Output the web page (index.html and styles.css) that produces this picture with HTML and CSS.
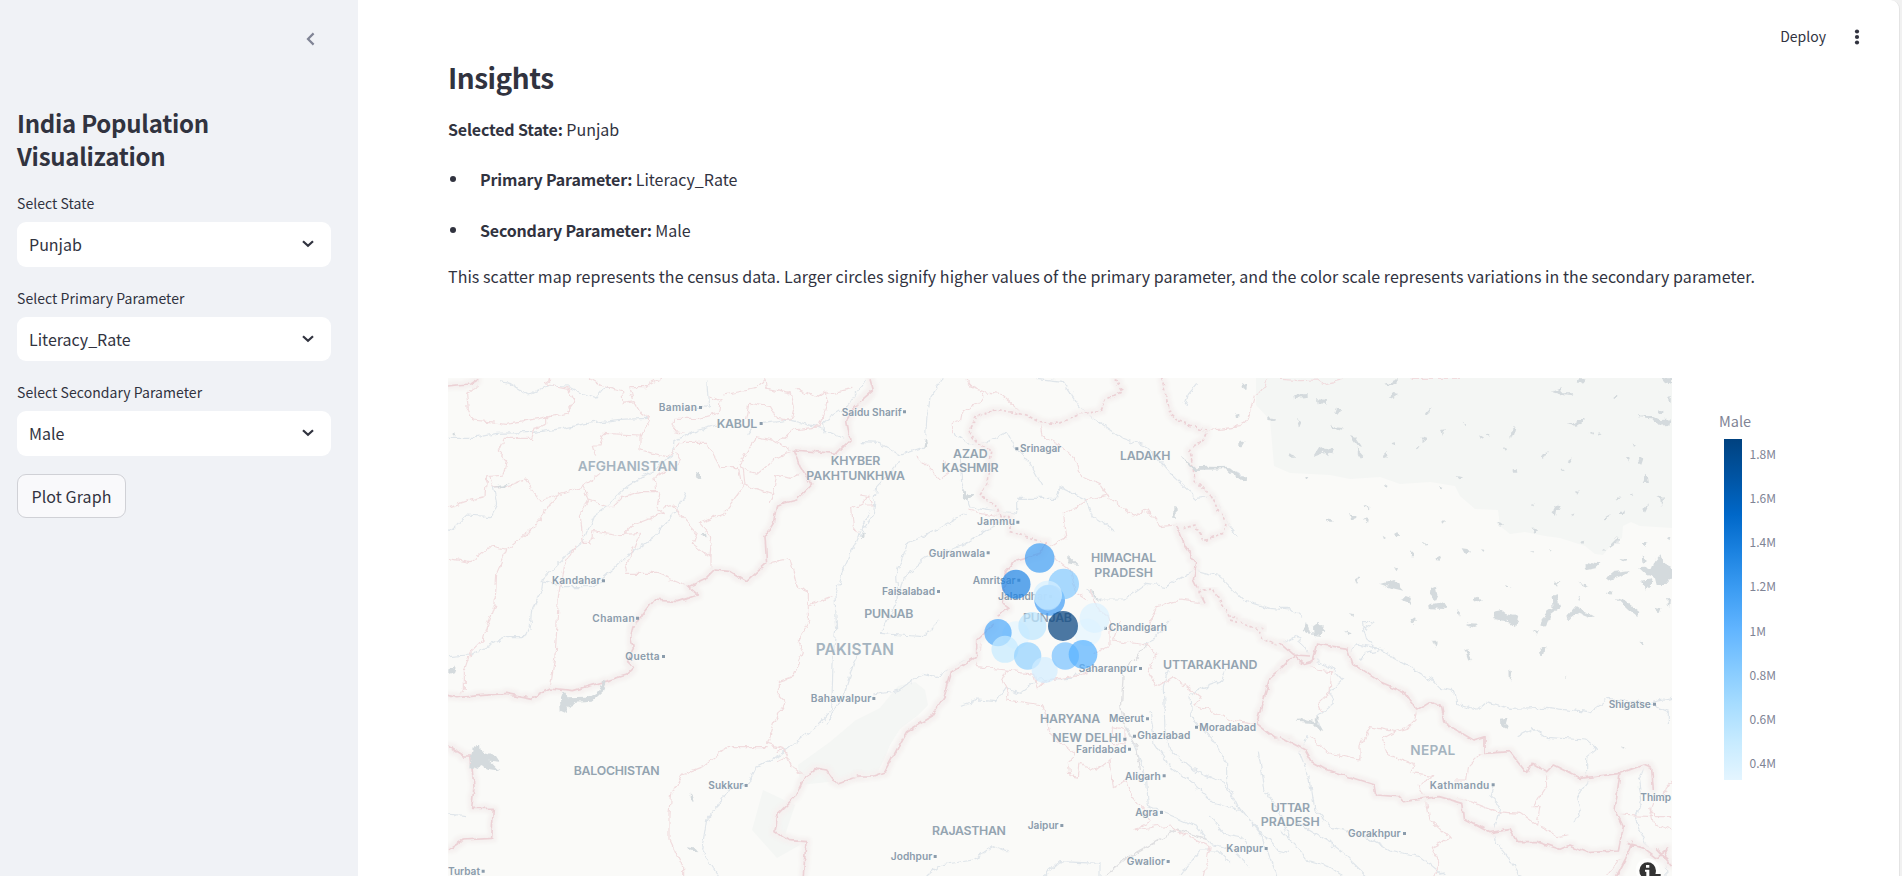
FILE: index.html
```
<!DOCTYPE html>
<html lang="en">
<head>
<meta charset="utf-8">
<title>India Population Visualization</title>
<link rel="stylesheet" href="styles.css">
</head>
<body>
<div class="app">
<aside class="sidebar">
  <div class="collapse"><svg width="9" height="14" viewBox="0 0 9 14"><path d="M7.6 1.4 2 7l5.600 5.600"/></svg></div>
  <h1>India Population Visualization</h1>
  <div class="field"><label>Select State</label><div class="select"><span>Punjab</span><svg width="12" height="8" viewBox="0 0 12 8"><path d="M1 1.200 6 5.800 11 1.200"/></svg></div></div>
  <div class="field"><label>Select Primary Parameter</label><div class="select"><span>Literacy_Rate</span><svg width="12" height="8" viewBox="0 0 12 8"><path d="M1 1.200 6 5.800 11 1.200"/></svg></div></div>
  <div class="field"><label>Select Secondary Parameter</label><div class="select"><span>Male</span><svg width="12" height="8" viewBox="0 0 12 8"><path d="M1 1.200 6 5.800 11 1.200"/></svg></div></div>
  <button class="plot">Plot Graph</button>
</aside>
<main class="main">
  <header class="toolbar"><span>Deploy</span><svg width="6" height="16" viewBox="0 0 6 16"><circle cx="3" cy="2.500" r="2.100"/><circle cx="3" cy="8" r="2.100"/><circle cx="3" cy="13.500" r="2.100"/></svg></header>
  <section class="insights">
    <h2>Insights</h2>
    <p class="state-line"><b>Selected State:</b> Punjab</p>
    <ul><li><b>Primary Parameter:</b> Literacy_Rate</li><li><b>Secondary Parameter:</b> Male</li></ul>
    <p class="desc">This scatter map represents the census data. Larger circles signify higher values of the primary parameter, and the color scale represents variations in the secondary parameter.</p>
  </section>
  <section class="chart">
  <svg class="map" viewBox="448 378 1224 498">
    <defs>
      <filter id="rough" x="-5%" y="-5%" width="110%" height="110%" color-interpolation-filters="sRGB">
        <feTurbulence type="fractalNoise" baseFrequency=".04" numOctaves="3" seed="4" result="n"/>
        <feDisplacementMap in="SourceGraphic" in2="n" scale="20" xChannelSelector="R" yChannelSelector="G"/>
      </filter>
      <filter id="frontier" x="-5%" y="-5%" width="110%" height="110%" color-interpolation-filters="sRGB">
        <feTurbulence type="fractalNoise" baseFrequency=".04" numOctaves="2" seed="9" result="n"/>
        <feDisplacementMap in="SourceGraphic" in2="n" scale="16" xChannelSelector="R" yChannelSelector="G" result="l"/>
        <feMorphology in="l" operator="dilate" radius="8" result="d"/>
        <feGaussianBlur in="d" stdDeviation="4" result="b"/>
        <feFlood flood-color="#f5f1f0"/><feComposite in2="b" operator="in" result="h"/>
        <feMerge><feMergeNode in="h"/><feMergeNode in="l"/></feMerge>
      </filter>
    </defs>
    <rect x="448" y="378" width="1224" height="498" fill="#fafaf8"/>
    <path class="land" d="M1256 378H1672V528L1640 526 1631 522 1623 526 1622 538 1612 544 1603 555 1595 554 1585 546 1560 538 1545 536 1525 532 1510 534 1500 526 1498 510 1475 509 1460 496 1455 486 1430 482 1400 484 1380 477 1350 479 1330 475 1290 473 1274 466 1270 420 1256 405Z"/>
    <path class="land" d="M898 686 915 682 925 690 928 705 918 715 900 729 890 745 884 760 875 777 800 785 798 765 830 742 856 720 880 708Z"/>
    <path class="land" d="M763 790 795 805 785 835 800 845 777 858 752 830Z"/>

    <g class="tile" transform="translate(440 370) scale(.33333)">
      <g class="river" filter="url(#rough)">
        <path d="M180 35 210 40 265 75 330 45 380 48 425 70 465 85 490 55 520 55M24 205 100 205 170 190 285 187 370 175 440 160 540 148 625 145M800 30 806 110 780 115 730 115M830 165 760 185 705 215 700 250 640 300 560 350 500 410 460 440 430 515 375 560 310 625 305 660 275 720 270 780M24 488 80 435 150 440 170 400 160 352 205 345M735 370 710 420 640 500 560 560 500 615 460 650 370 650 305 635M970 160 1050 150 1130 170 1210 205M1280 30 1220 110 1150 155 1155 190M1290 420 1255 500 1210 600 1185 680 1190 780M920 195 935 175"/>
      </g>
      <g class="region" filter="url(#rough)">
        <path d="M110 45 80 70 85 120 100 150 200 160 300 145 380 130 405 95 385 55 310 40 330 25M320 135 320 165 285 175 275 205 190 205 175 240 200 270 190 315 140 320 135 380 85 392 24 412M445 25 490 50 545 65 550 100 585 95 605 130 628 145 600 200 600 240 680 260 700 245 720 220 800 220 840 290 895 290 905 345M660 25 620 50 570 50 580 90M600 195 490 190 480 225 460 225 470 260M480 310 430 350 360 375 300 390 255 330 205 350 160 350 150 320M430 350 445 395 420 430 430 520 450 520 460 485 520 495 600 490 575 550 555 590 560 610 650 610 725 640 745 655M445 390 500 410 520 410 550 380 600 365 660 365 650 415 670 430 580 465 550 495M670 415 700 405 750 470 770 490 760 520 810 560 815 500 780 460 850 430 915 345 910 300 900 280 950 200 1000 210 1050 240M710 250 720 270 700 295 645 320 650 365M810 560 810 600M24 565 90 578 145 530 200 540 260 490 300 450 330 400 360 370M200 540 170 610 165 700 140 780M410 525 370 590 355 680 350 780M806 80 840 95 835 130 780 145 705 145 700 185 735 190M850 75 950 55 975 25M920 150 930 100 990 110 1010 145 1050 150 1060 110 1050 70 980 55 975 30M1070 55 1130 85 1160 65 1160 105 1140 170 1060 180 1010 220M1160 70 1240 55M1050 245 1000 270 950 310 910 300M1100 305 1050 325 1010 315 1000 375 910 345M1000 375 990 400M980 580 1050 565 1070 650 1105 665 1105 705 1175 680M1105 705 1105 750M1290 375 1265 400 1235 415 1240 470 1255 490"/>
      </g>
      <g class="border" filter="url(#frontier)">
        <path d="M24 48 50 45 90 42 115 25M1290 70 1245 110 1220 150 1230 210 1190 250 1060 240 1080 290 1115 345 1070 390 1010 405 1000 460 975 500 980 580 920 635 870 605 825 600 800 625 745 650 775 675 715 695 640 690 605 735 575 780"/>
      </g>
      <g class="lake" filter="url(#rough)"><path d="M768 305 780 305 780 328 773 326ZM785 490 798 488 800 502 790 500ZM160 352 190 345 210 335 195 352ZM38 190 46 186 46 200 38 198ZM1265 494 1275 494 1272 504 1266 503Z"/></g>
      <g class="city"><text x="656" y="122" textLength="115">Bamian</text><text x="336" y="643" textLength="146">Kandahar</text><text x="457" y="755" textLength="127">Chaman</text><path d="M777 108h9v9h-9zM486 628h9v9h-9zM588 740h9v9h-9zM959 156h9v9h-9z"/></g>
      <g class="state"><text x="830" y="174" textLength="122">KABUL</text></g>
      <g class="country"><text x="413" y="302" textLength="301">AFGHANISTAN</text></g>
    </g>

    <g class="tile" transform="translate(440 620) scale(.33333)">
      <g class="river" filter="url(#rough)"><path d="M24 110 90 105 150 75 200 50 255 50 275 0M1190 0 1180 100 1175 270 1130 320 1060 375 1020 405 950 440 925 490 860 515 830 560 800 600 785 690 835 768M1260 95 1240 130 1210 230 1160 310M24 582 78 587"/></g>
      <g class="region" filter="url(#rough)"><path d="M145 0 130 60 90 100 73 150 73 210 60 228M350 30 345 110 330 205M1110 0 1075 60 1090 95 1060 170 1015 185 1015 230 1035 250 1000 310 980 370 1030 385 1055 440 1095 468M980 380 865 380 790 440 725 465 695 520 690 580 690 660 728 740 728 768M1010 395 1030 390 1040 410 1010 425"/></g>
      <g class="border" filter="url(#frontier)"><path d="M580 15 572 50 580 85 560 125 580 145 560 165 400 212 330 204 275 235 200 220 50 233 24 226M24 378 70 408 92 408 102 500 95 565 160 565 155 655 70 660 24 690M1260 468 1190 492 1160 450 1130 445 1095 470 1065 530 1015 580 1005 635 1050 662 1098 665 1090 768"/></g>
      <g class="lake" filter="url(#rough)"><path d="M368 215 380 215 382 235 440 233 480 210 492 183 500 185 488 215 455 245 410 248 385 260 375 278 362 272 360 235ZM98 385 120 370 122 393 165 405 178 425 148 422 178 452 150 448 120 435 110 450 88 440ZM745 530 757 520 757 548ZM740 682 765 685 775 697 755 695ZM25 148 48 143 42 160 25 165Z"/></g>
      <g class="city"><text x="556" y="121" textLength="103">Quetta</text><text x="805" y="507" textLength="105">Sukkur</text><text x="24" y="765" textLength="96">Turbat</text><text x="1112" y="245" textLength="182">Bahawalpur</text><path d="M666 105h9v9h-9zM914 492h9v9h-9zM125 749h9v9h-9zM1297 231h9v9h-9z"/></g>
      <g class="state"><text x="401" y="464" textLength="258">BALOCHISTAN</text></g>
      <g class="country big"><text x="1127" y="106" textLength="235">PAKISTAN</text></g>
    </g>

    <g class="tile" transform="translate(860 370) scale(.33333)">
      <g class="river" filter="url(#rough)"><path d="M250 25 210 80 200 150 195 230 120 255 60 220 0 218M530 25 610 35 660 110 700 145 790 205 860 230 940 320 1010 385 1060 380 1090 440 1135 500M1010 40 985 70 975 105M285 190 330 225 385 215 440 185 465 230 510 280 545 345M300 240 305 340 330 410 470 430 470 385 590 385 600 350 680 390 700 440 760 480M440 450 380 480 320 520 200 560 130 620 110 700 65 780M120 270 115 280 50 350 40 430 0 500M320 430 190 500 140 520 110 620 115 690M680 660 720 690 790 690 860 640 920 650 1000 600 1080 620 1150 690 1230 715 1290 720M1000 295 1100 292 1150 320"/></g>
      <g class="region" filter="url(#rough)"><path d="M318 25 330 50 370 65 360 95 310 125 305 150 280 160 280 190M370 65 420 70 480 125M540 155 550 200 590 220 640 260 665 320 720 345 740 375 820 440 860 415 900 470 950 465M740 375 680 390 610 430 620 500 570 530M0 375 30 380 40 405 15 405M170 260 200 290 240 330 265 310 250 270M325 420 420 440M580 560 630 600 650 670 680 690M690 660 715 720 745 740 760 780M1040 700 960 690 890 710 870 760 875 780M1220 25 1215 50 1185 70 1165 140 1140 170 1045 182"/></g>
      <g class="border"><g class="dashed" filter="url(#frontier)"><path d="M765 25 785 65 735 90 720 125 665 130 600 160 540 158 500 135 410 118 350 140 325 185 355 220 395 245 380 345 360 375 410 410 420 440 450 440 450 485 500 500 560 520M905 25 930 130 950 150 1040 185 1030 210 990 240 1005 330 1050 375 1075 420 1095 455 1090 490 1030 510 1005 465 955 480"/></g>
      <g filter="url(#frontier)"><path d="M560 520 540 550 470 570 435 610 430 700 450 715 410 735M950 465 975 530 1010 580 1000 630 1035 700M0 95 40 60 30 25"/></g><g class="dashed" filter="url(#frontier)"><path d="M1015 665 1060 660 1110 740 1210 780"/></g></g>
      <g class="lake" filter="url(#rough)"><path d="M960 252 1005 292 1050 290 1110 292 1145 320 1162 318 1160 335 1135 330 1100 298 1000 300ZM1142 36 1162 45 1158 60 1142 52ZM1126 130 1138 130 1138 143 1128 142ZM1222 142 1248 145 1246 153 1222 150ZM1138 212 1152 212 1145 235 1138 235ZM940 410 950 415 950 445 940 438ZM625 555 655 585 625 580ZM685 650 720 690 705 680ZM310 360 325 375 338 375 325 390 308 385ZM195 205 205 235 190 232Z"/></g>
      <g class="city"><text x="-55" y="137" textLength="180">Saidu Sharif</text><text x="480" y="247" textLength="124">Srinagar</text><text x="351" y="466" textLength="114">Jammu</text><text x="206" y="561" textLength="169">Gujranwala</text><text x="338" y="641" textLength="129">Amritsar</text><text x="66" y="675" textLength="159">Faisalabad</text><text x="414" y="690" textLength="147">Jalandhar</text><path d="M129 121h9v9h-9zM466 232h9v9h-9zM469 452h9v9h-9zM380 544h9v9h-9zM472 626h9v9h-9zM231 660h9v9h-9zM567 675h9v9h-9z"/></g>
      <g class="state"><text x="-88" y="285" textLength="149">KHYBER</text><text x="-161" y="329" textLength="296">PAKHTUNKHWA</text><text x="279" y="264" textLength="104">AZAD</text><text x="245" y="307" textLength="171">KASHMIR</text><text x="780" y="269" textLength="151">LADAKH</text><text x="693" y="576" textLength="196">HIMACHAL</text><text x="703" y="620" textLength="176">PRADESH</text><text x="13" y="745" textLength="147">PUNJAB</text><text x="489" y="756" textLength="147">PUNJAB</text></g>
    </g>

    <g class="tile" transform="translate(860 620) scale(.33333)">
      <g class="river" filter="url(#rough)"><path d="M240 0 190 50 120 45 60 40M350 110 300 130 230 170 190 160 120 210 40 225M300 258 350 240 410 245 435 205 480 220 530 180 630 175 700 130M930 0 880 60 850 75M925 150 910 200 915 330 930 390 1000 450 1090 490 1130 560 1180 610 1250 690 1290 700M1095 150 1080 185 1010 210 990 230 995 290 1060 360 1100 430 1100 490 1140 570M870 270 885 370 930 440 1010 500 1060 550 1150 575 1200 640 1225 700 1250 768M800 320 840 420 860 480 865 560 930 585 1010 620 1050 670 1120 690 1170 740M1195 395 1215 510 1250 560 1290 660M200 768 240 735 340 720 400 680 445 700M550 768 600 725 720 730 720 768M960 768 1020 690 1070 690 1110 730M1050 590 1090 640 1140 650 1190 700"/></g>
      <g class="rail" filter="url(#rough)"><path d="M860 75 790 150 785 250 795 320 830 380 838 450M735 768 800 715 950 630 1040 655"/></g>
      <g class="region" filter="url(#rough)"><path d="M360 60 345 140 440 150 520 160 535 205 560 180 640 170 700 150M440 150 425 180 445 220 440 240 550 255 570 340 640 400 625 430 630 470 655 475 660 430 710 450 750 420 760 500 800 480 815 530 850 570 870 605 820 630 930 615 945 630 1050 680 1030 768M700 100 750 75 750 20M780 10 760 60 860 75 890 100 865 155 890 200 940 170 1020 230 1005 255 1050 270 1110 300 1190 310M760 320 760 370 795 375 795 330 760 320"/></g>
      <g class="border"><g filter="url(#frontier)"><path d="M400 10 350 60 350 110 275 155 255 225 215 290 140 335 110 390 75 455 40 468-10 468M1290 125 1230 175 1210 240 1190 310 1240 350 1290 360"/></g><g class="dashed" filter="url(#frontier)"><path d="M1110 0 1190 25 1210 60 1290 90"/></g></g>
      <g class="city"><text x="746" y="34" textLength="175">Chandigarh</text><text x="656" y="156" textLength="175">Saharanpur</text><text x="747" y="306" textLength="105">Meerut</text><text x="1018" y="332" textLength="170">Moradabad</text><text x="832" y="357" textLength="159">Ghaziabad</text><text x="648" y="398" textLength="151">Faridabad</text><text x="795" y="479" textLength="107">Aligarh</text><text x="826" y="588" textLength="68">Agra</text><text x="503" y="627" textLength="93">Jaipur</text><text x="92" y="720" textLength="125">Jodhpur</text><text x="800" y="735" textLength="115">Gwalior</text><text x="1099" y="696" textLength="110">Kanpur</text><path d="M732 20h9v9h-9zM837 141h9v9h-9zM858 292h9v9h-9zM1005 317h9v9h-9zM819 344h9v9h-9zM790 353h9v9h-9zM804 383h9v9h-9zM908 463h9v9h-9zM900 573h9v9h-9zM601 612h9v9h-9zM221 705h9v9h-9zM920 720h9v9h-9zM1214 681h9v9h-9z"/></g>
      <g class="state"><text x="909" y="146" textLength="283">UTTARAKHAND</text><text x="540" y="308" textLength="181">HARYANA</text><text x="577" y="367" textLength="207">NEW DELHI</text><text x="216" y="646" textLength="222">RAJASTHAN</text><text x="1232" y="575" textLength="118">UTTAR</text><text x="1202" y="619" textLength="177">PRADESH</text></g>
    </g>

    <g class="tile" transform="translate(1280 370) scale(.33333)">
      <g class="region" filter="url(#rough)"><path d="M0 28 60 32 110 30 130 44 190 28M395 25H540"/></g>
      <g class="river" filter="url(#rough)"><path d="M0 712 25 712 60 742M280 755 250 755 255 780"/></g>
      <g class="lake" filter="url(#rough)">
        <path d="M312 42 350 27 350 38 325 46ZM40 75 80 72 80 84 42 87ZM114 85 138 86 136 102 116 100ZM325 85 352 66 352 76 335 88ZM165 135 172 116 180 118 172 138ZM48 165 55 148 63 152 55 172ZM150 162 165 172 188 174 186 182 160 176ZM213 198 228 203 246 230 235 228ZM228 232 250 255 243 263 235 252ZM100 258 118 230 132 240 155 235 162 250 145 248 142 262 125 248ZM28 246 44 252 44 264 30 262ZM75 318 85 318 78 328ZM138 442 150 444 158 458 148 458ZM205 432 228 440 222 446 210 444ZM248 446 266 450 264 460ZM248 402 266 414 262 418ZM193 385 202 393ZM312 255 320 246 323 258 313 262ZM335 216 348 214 348 226 336 222ZM425 202 438 206 438 216 428 214ZM410 235 422 230 416 240ZM438 128 450 112 448 132ZM486 180 498 178 492 192ZM530 318 546 322 538 328ZM478 348 490 350 488 358 479 355ZM548 155 558 162 555 167ZM597 196 608 202 603 208ZM618 185 633 192 628 200ZM690 185 705 170 700 190 692 210ZM670 234 682 240 677 245ZM730 248 740 252ZM698 298 710 296 712 308 698 308ZM790 250 804 247 794 262ZM860 275 878 262 872 278ZM840 294 852 300 846 304ZM815 66 845 55 850 70 880 70 875 78 850 76ZM890 42 900 24 912 30 905 40ZM858 162 880 162 895 150 915 150 905 160 885 167ZM1070 138 1120 138 1145 150 1172 148 1168 165 1135 167 1115 145 1075 142ZM1142 22H1176V42L1155 36ZM1165 85 1172 80 1172 98 1166 98ZM1135 118 1150 122 1150 132 1132 132ZM1005 75 1012 75 1010 90 1004 88ZM926 182 938 190 933 194ZM955 190 968 192 960 198ZM1058 216 1068 222 1062 228ZM1076 270 1082 262 1090 266 1084 284 1076 280ZM1038 264 1050 266 1044 278ZM1088 340 1100 312 1104 338ZM1132 382 1150 378 1152 390 1146 406 1144 386ZM1090 420 1103 403 1102 415 1095 428ZM970 448 990 436 978 454ZM1020 425 1038 425 1036 432 1020 432ZM1010 382 1028 384 1014 390ZM1050 374 1056 368 1060 382ZM815 434 822 406 842 408 836 420 828 420 825 440ZM876 434 888 430 882 438ZM758 474 768 478 762 486ZM750 404 758 402 752 412ZM892 360 900 362 894 372ZM900 516 914 512 910 522ZM985 530 1015 500 1012 518 990 534ZM965 536 978 540 972 546ZM1088 516 1100 516 1096 528ZM1158 508 1168 500 1166 514ZM650 460 666 466 660 470ZM490 450 498 454 492 458ZM315 343 323 348 318 354ZM308 497 318 504 312 508ZM346 488 354 484 354 500 348 502ZM428 516 440 526 434 530ZM390 545 402 545 402 562 394 562ZM548 535 570 538 568 548 558 553ZM603 538 617 540 610 545ZM462 570 480 560 486 572ZM338 588 354 595 350 604ZM228 628 238 622 232 642ZM300 642 340 630 352 640 362 655 370 662 335 654ZM368 690 380 678 396 684 390 698ZM458 655 470 650 474 668 466 688 452 690ZM448 702 485 698 502 706 495 720 450 718ZM578 690 595 683 602 692 590 700ZM640 725 665 720 680 732 715 740 708 768 695 755 645 748ZM532 716 540 725 537 738ZM393 745 405 736 410 748 400 762ZM815 680 830 672 840 710 815 728 800 768 784 762 800 720 818 715ZM862 740 890 708 912 722 945 740 925 740 895 728 870 748ZM914 592 935 576 955 580 950 594 920 600ZM980 622 1000 606 1050 600 1022 618 985 632ZM1020 566 1040 570 1038 578ZM1075 592 1095 590 1115 600 1125 575 1145 553 1150 578 1176 590V625L1160 645 1130 645 1125 625 1100 615ZM1080 632 1114 628 1112 650 1102 650 1100 662ZM1088 556 1100 575 1090 578ZM1010 684 1035 692 1078 726 1072 738 1045 718ZM978 668 998 670 994 677ZM895 636 920 640 925 650ZM825 638 838 636 834 646 826 645ZM675 645 698 650 680 652ZM720 738 736 740ZM1160 685 1170 685 1168 710 1160 702ZM1118 710 1145 715 1140 730ZM893 678 900 680 897 690ZM210 730 222 732 220 744ZM100 770 130 768 135 780H100ZM80 757 90 765 85 780 76 778ZM558 758 595 770 570 770ZM188 570 195 572ZM92 376 102 380ZM858 616 870 618ZM746 544 762 544 760 548ZM808 540 814 540 812 548Z"/>
      </g>
    </g>

    <g class="tile" transform="translate(1280 620) scale(.33333)">
      <g class="river" filter="url(#rough)"><path d="M10 68 50 45 70 80 90 110 160 150 188 180 150 215 160 250 110 290 125 330M85 345 60 400 90 480 105 570 150 620 260 650 330 690 420 710 490 768M280 5 250 25 260 60 285 80 370 130 455 180 480 205 525 215 530 250 590 268 620 245 690 265 800 262 925 278 985 235 1100 250 1176 235M210 95 230 72 300 85M235 125 260 100 310 90M710 350 760 325 800 352 920 360 950 385 920 410 920 490 890 530 900 570 885 610M640 495 630 530 660 560 640 630 650 670 690 720 720 768M0 630 50 680 80 720 150 740 190 768M50 610 150 670 200 710 260 768M1090 440 1075 480 1085 540 1065 600 1100 680 1155 720 1158 768M1110 252 1165 275 1165 310"/></g>
      <g class="region" filter="url(#rough)"><path d="M90 130 110 150 155 155 150 220 115 250 125 275M90 350 150 400 240 420 240 380 270 320 345 335 380 325 405 300 410 270M345 335 310 355 320 400 400 430 390 460 460 470 415 495 440 545 450 600 510 655 450 685 480 730 460 768M605 400 565 440 560 480 520 480M470 530 560 540 650 575 720 580 770 615 780 560 760 560 800 500 800 460M780 615 830 650 865 645M1010 585 1120 590M1176 590 1130 590 1110 570 1120 610 1176 630M1040 690 1020 720 980 768M1176 480 1155 510 1150 540 1120 540 1110 580"/></g>
      <g class="border" filter="url(#frontier)"><path d="M0 70 70 132 95 125 110 72 200 85 215 130 300 185 370 215 410 270 450 245 485 260 495 310 580 360 615 350 615 400 690 395 740 460 755 430 800 455 820 435 900 475 1020 460 1090 435 1115 445 1120 510M0 145 40 105 90 108M1020 460 1005 570 1030 620 1015 690 920 695 870 675 840 688 770 665 710 665 690 628 630 638 550 595 545 550 475 530 370 545 355 530 290 525 285 495 190 465 130 445 95 425 75 390 0 350M1040 670 1090 685 1130 715 1160 690 1160 715 1130 690 1176 740M1060 665 1035 720 1010 768"/></g>
      <g class="lake" filter="url(#rough)"><path d="M100 18 115 12 133 30 118 48 100 45ZM65 32 85 10 96 42ZM195 32 215 40 208 45ZM392 0H408L396 14ZM560 12 595 14 582 24ZM650 0H712L705 22 690 8ZM785 0H802V15L785 18ZM755 28 775 35 772 48ZM458 58 470 68 467 84ZM555 85 565 90 575 120 568 122ZM778 85 796 78 794 100 785 112ZM688 148 697 160 690 180ZM663 296 680 294 675 312 686 318 682 328 664 318ZM1026 382 1040 388 1032 392ZM855 168 862 170 858 174ZM1078 62 1092 64 1088 72ZM1080 48 1085 50ZM1080 97 1086 105ZM888 244 897 248ZM45 300 70 298 105 303 112 290 118 292 112 306 130 332 118 330 100 310 60 306Z"/></g>
      <g class="city"><text x="986" y="264" textLength="126">Shigatse</text><text x="449" y="506" textLength="179">Kathmandu</text><text x="204" y="650" textLength="158">Gorakhpur</text><text x="1081" y="542" textLength="92">Thimp</text><path d="M1119 248h9v9h-9zM635 490h9v9h-9zM369 636h9v9h-9z"/></g>
      <g class="country"><text x="391" y="405" textLength="135">NEPAL</text></g>
      <circle cx="1103" cy="751" r="36" fill="#fff" opacity=".7"/><circle cx="1103" cy="752" r="25" fill="#333"/><path d="M1098 735h10v8h-10zM1095 749h13v19h-9v-13h-4z" fill="#fff"/><path d="M1120 762h22v6h-22z" fill="#333"/>
    </g>

    <g class="points" transform="translate(960 520) scale(.33333)">
      <circle cx="239" cy="114" r="44.500" fill="#3d9df3"/><circle cx="168" cy="193" r="43.500" fill="#1c83e6"/><circle cx="269" cy="241" r="46" fill="#3d9bf6"/><circle cx="311" cy="192" r="46" fill="#83c9ff"/><circle cx="263" cy="225" r="43" fill="#d5efff" fill-opacity=".6"/><circle cx="264" cy="233" r="39" fill="#b5e0ff"/>
      <circle cx="383" cy="337" r="41" fill="#e4f5ff"/><circle cx="404" cy="294" r="45" fill="#daf1ff"/><circle cx="168" cy="345" r="41" fill="#e4f5ff"/><circle cx="217" cy="318" r="42" fill="#bce6ff"/><circle cx="309" cy="318" r="45" fill="#003f7e"/><circle cx="114" cy="338" r="41" fill="#4ba8fb"/><circle cx="135" cy="388" r="40.500" fill="#c5e9ff"/><circle cx="203" cy="408" r="41" fill="#90d0ff"/><circle cx="254" cy="450" r="39" fill="#d2edff"/><circle cx="316" cy="408" r="41" fill="#76c0ff"/><circle cx="369" cy="403" r="43" fill="#55b0ff"/>
    </g>
  </svg>
  <div class="legend"><div class="legend-title">Male</div><div class="scale"><div class="bar"></div><ol><li>1.8M</li><li>1.6M</li><li>1.4M</li><li>1.2M</li><li>1M</li><li>0.8M</li><li>0.6M</li><li>0.4M</li></ol></div></div>
  </section>
</main>
</div>
</body>
</html>
```
FILE: styles.css
```
* { box-sizing: border-box; }
body { margin: 0; background: #f1f1f1; color: #31333f; font: 16px/28px "Noto Sans CJK SC", "Noto Sans", sans-serif; overflow: hidden; }
.app { display: flex; height: 876px; width: 1900px; background: #fff; border-right: 1px solid #e4e4e4; border-top-right-radius: 9px; overflow: hidden; }
.sidebar { flex: 0 0 358px; background: #f0f2f6; padding: 0 27px 0 17px; }
.collapse { height: 107px; padding: 32px 16px 0 0; display: flex; justify-content: flex-end; align-items: flex-start; }
.collapse path { fill: none; stroke: #808495; stroke-width: 2.2; }
h1, h2, p, ul, ol { margin: 0; padding: 0; }
h1 { font-size: 24px; line-height: 32.500px; font-weight: 600; height: 83px; letter-spacing: -.25px; }
.field { height: 94.600px; }
label { display: block; font-size: 14px; line-height: 27px; height: 32px; letter-spacing: .05px; }
.select { height: 44.500px; background: #fff; border-radius: 9px; display: flex; align-items: center; justify-content: space-between; padding: 0 17px 0 12px; }
.select path { fill: none; stroke: #31333f; stroke-width: 2.2; }
.plot { display: block; width: 109px; height: 44.500px; padding: 0; border: 1px solid #d0d1d6; border-radius: 9px; background: #f9f9fb; color: inherit; font: inherit; letter-spacing: .1px; }
.main { flex: 1; min-width: 0; padding-left: 90px; }
.toolbar { height: 52px; padding: 20px 39px 0 0; display: flex; justify-content: flex-end; gap: 28px; font-size: 14px; line-height: 33px; }
.toolbar svg { margin-top: 9px; fill: #31333f; }
.insights { height: 326px; }
h2 { font-size: 28px; font-weight: 600; line-height: 50px; height: 63px; letter-spacing: -.5px; }
b { font-weight: 600; letter-spacing: -.18px; }
ul { list-style: none; padding-top: 22px; }
li { line-height: 28px; }
.insights li { height: 50.500px; padding-left: 32px; display: flex; gap: 3.500px; align-items: flex-start; }
.insights li::before { content: ""; flex: none; width: 6px; height: 6px; border-radius: 3px; background: #31333f; margin: 11px 20.500px 0 -30px; }
.desc { white-space: nowrap; margin-top: -4px; letter-spacing: .056px; }
.chart { display: flex; height: 498px; }
.map { flex: 0 0 1224px; width: 1224px; height: 498px; overflow: hidden; }
.legend { padding: 30px 0 0 47px; color: #808495; }
.legend-title { font-size: 14.500px; line-height: 25px; height: 26px; }
.scale { display: flex; padding: 5px 0 0 4.500px; gap: 8px; }
.bar { width: 18px; height: 341px; background: linear-gradient(to top, #e4f5ff, #c7ebff, #a6dcff, #83c9ff, #60b4ff, #3d9df3, #1c83e1, #0068c9, #0054a3, #004280); }
ol { list-style: none; margin-top: -7px; font-size: 12px; }
ol li { height: 44.150px; line-height: 44px; }
.land { fill: #f4f6f4; }
.tile path, .points circle { stroke: none; }
.tile .river path { fill: none; stroke: #dfe5ea; stroke-width: 3.5; }
.tile .rail path { fill: none; stroke: #dfdfe1; stroke-width: 4; }
.tile .region path { fill: none; stroke: #f1dcde; stroke-width: 3.5; }
.tile .border path { fill: none; stroke: #ecd1d5; stroke-width: 5; stroke-linejoin: round; }
.tile .dashed path { stroke-dasharray: 9 7; }
.lake { fill: #d4dadd; }
.tile text { font-family: Inter, "Open Sans", sans-serif; paint-order: stroke; stroke: #fafaf8; stroke-width: 4; stroke-opacity: .7; }
.city { fill: #8b9cac; }
.city text { font-size: 30.5px; font-weight: 600; }
.state { fill: #94a4b1; }
.tile .state text { font-size: 37px; font-weight: 600; }
.country { fill: #a5b4c0; }
.country text { font-size: 41px; font-weight: 600; }
.big text { font-size: 46px; }
.points circle { fill-opacity: .7; }
```
